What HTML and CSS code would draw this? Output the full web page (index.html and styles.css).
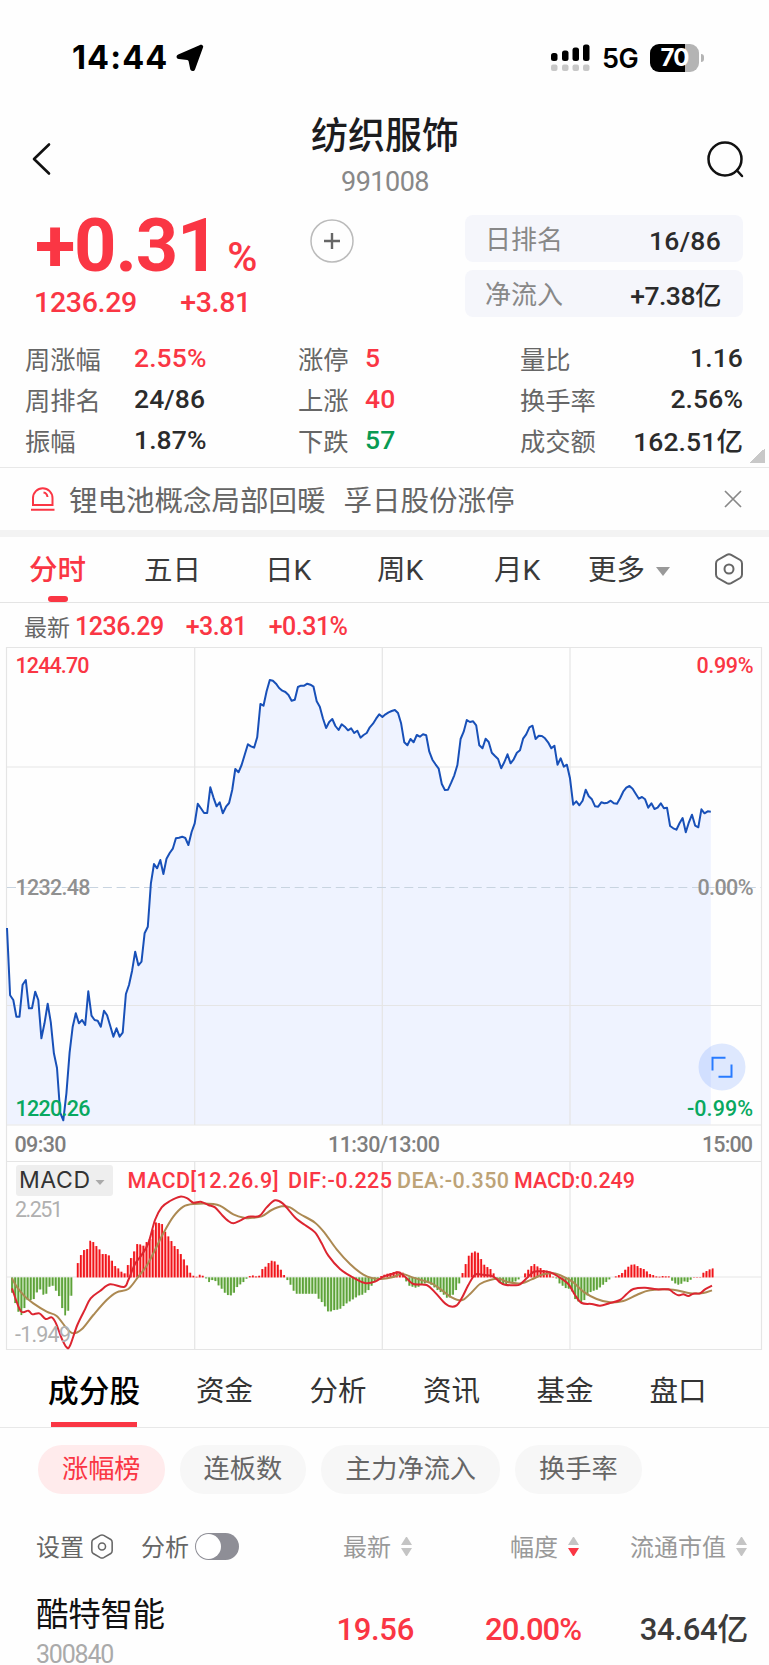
FILE: index.html
```html
<!DOCTYPE html>
<html lang="zh-CN">
<head>
<meta charset="utf-8">
<title>纺织服饰 991008</title>
<link rel="stylesheet" href="styles.css">
</head>
<body>
<header class="status">
  <div class="status-left">
    <span class="clock">14:44</span>
    <svg class="nav-arrow" width="28" height="28" viewBox="0 0 28 28"><path d="M26.300 1.200C27.200 1.500 27.400 2.400 27 3.500L19 25.400C18.200 27.600 14.600 27.500 14.200 25L12.600 17.300Q12.400 16.200 11.300 16L2.800 15.100C0 14.700-.2 11.600 2.200 10.500L23.500 1.200C24.700.7 25.700.8 26.300 1.200Z"/></svg>
  </div>
  <div class="status-right">
    <svg width="40" height="28" viewBox="0 0 40 28"><g fill="#000"><rect x="0" y="9" width="6.500" height="8" rx="2.500"/><rect x="11" y="6.500" width="6.500" height="10.500" rx="2.500"/><rect x="21.500" y="3.500" width="6.500" height="13.500" rx="2.500"/><rect x="32" y=".5" width="6.500" height="16.500" rx="2.500"/></g><g fill="#c8c8c8"><rect x="0" y="20.500" width="6.500" height="6.500" rx="2"/><rect x="11" y="20.500" width="6.500" height="6.500" rx="2"/><rect x="21.500" y="20.500" width="6.500" height="6.500" rx="2"/><rect x="32" y="20.500" width="6.500" height="6.500" rx="2"/></g></svg>
    <span class="net">5G</span>
    <div class="battery"><span>70</span></div><i class="nub"></i>
  </div>
</header>

<nav class="titlebar">
  <svg class="back" width="20" height="34" viewBox="0 0 20 34"><path d="M17 2.500L2 17L17 31.500"/></svg>
  <div class="title"><h1>纺织服饰</h1><p>991008</p></div>
  <svg class="search" width="40" height="40" viewBox="0 0 40 40"><circle cx="19" cy="19" r="16.500"/><path d="M31 30.500L36 36"/></svg>
</nav>

<section class="hero">
  <div class="quote">
    <div class="change">+0.31<small>%</small></div>
    <div class="price"><span>1236.29</span><span>+3.81</span></div>
  </div>
  <svg class="add" width="44" height="44" viewBox="0 0 44 44"><circle cx="22" cy="22" r="21"/><path d="M14 22H30M22 14V30"/></svg>
  <div class="ranks">
    <div class="rank"><label>日排名</label><b>16/86</b></div>
    <div class="rank"><label>净流入</label><b class="tight">+7.38亿</b></div>
  </div>
</section>

<section class="stats">
  <label>周涨幅</label><b class="red">2.55%</b><label>涨停</label><b class="red">5</b><label>量比</label><b class="r">1.16</b>
  <label>周排名</label><b>24/86</b><label>上涨</label><b class="red">40</b><label>换手率</label><b class="r">2.56%</b>
  <label>振幅</label><b>1.87%</b><label>下跌</label><b class="green">57</b><label>成交额</label><b class="r">162.51亿</b>
  <i class="corner"></i>
</section>

<section class="news">
  <svg width="26" height="26" viewBox="0 0 26 26"><path d="M3 19V12A9.700 9.700 0 0 1 22.500 12V19Z M1 23.700H24.500 M13.500 6.500Q17 7 17.500 11"/></svg>
  <p><span>锂电池概念局部回暖</span><span>孚日股份涨停</span></p>
  <svg class="close" width="18" height="18" viewBox="0 0 18 18"><path d="M1 1L17 17M17 1L1 17"/></svg>
</section>

<nav class="periods">
  <a class="on">分时</a><a>五日</a><a>日K</a><a>周K</a><a>月K</a><a>更多<i class="caret"></i></a>
  <svg width="30" height="32" viewBox="0 0 30 32"><path d="M12.800 1.800Q15 .6 17.200 1.800L26.200 7Q28 8.200 28 10.500V21.500Q28 23.800 26.200 25L17.200 30.200Q15 31.400 12.800 30.200L3.800 25Q2 23.800 2 21.500V10.500Q2 8.200 3.800 7Z"/><circle cx="15" cy="16" r="4.500"/></svg>
</nav>

<div class="latest"><label>最新</label><span>1236.29</span><span>+3.81</span><span>+0.31%</span></div>

<svg class="chart" width="769" height="706" viewBox="0 646 769 706">
  <path id="area"/>
  <g class="grid">
    <path d="M6.500 647.500H761.500V1349.500H6.500ZM6.500 767H761.500M6.500 1005.500H761.500M6.500 1125H761.500M6.500 1161.500H761.500M6.500 1277H761.500"/>
    <path d="M194.700 648V1125M382.300 648V1125M570 648V1125M194.700 1162V1349M382.300 1162V1349M570 1162V1349"/>
  </g>
  <path class="mid" d="M7 887.500H761"/>
  <path id="line"/>
  <g class="axis">
    <text class="up" x="15.500" y="672.500" textLength="74">1244.70</text>
    <text class="up" x="696.500" y="672.500" textLength="57">0.99%</text>
    <text class="flat" x="15.500" y="895" textLength="75">1232.48</text>
    <text class="flat" x="697.500" y="895" textLength="56">0.00%</text>
    <text class="down" x="15.500" y="1116" textLength="75">1220.26</text>
    <text class="down" x="687" y="1116" textLength="66">-0.99%</text>
    <text class="time" x="14.500" y="1151.500" textLength="52">09:30</text>
    <text class="time" x="328" y="1151.500" textLength="112">11:30/13:00</text>
    <text class="time" x="702" y="1151.500" textLength="51">15:00</text>
  </g>
  <g class="expand"><circle cx="722" cy="1067" r="23.500"/><path d="M712.500 1070.500V1057.700H725.500M731.500 1064.500V1076.800H718.500"/></g>
  <g id="bars"></g>
  <path id="dea"/><path id="dif"/>
  <rect class="pick" x="16" y="1165" width="97" height="31" rx="3"/>
  <text class="pick-text" x="19" y="1188" textLength="71">MACD</text>
  <path class="pick-caret" d="M95.500 1180H104.500L100 1185Z"/>
  <g class="macd">
    <text class="up" x="127.500" y="1187.500" textLength="151">MACD[12.26.9]</text>
    <text class="up" x="288" y="1187.500" textLength="104">DIF:-0.225</text>
    <text class="dea-text" x="397" y="1187.500" textLength="112">DEA:-0.350</text>
    <text class="up" x="514" y="1187.500" textLength="121">MACD:0.249</text>
    <text class="range" x="15" y="1217" textLength="48">2.251</text>
    <text class="range" x="15" y="1342" textLength="56">-1.949</text>
  </g>
</svg>

<nav class="sections"><a class="on">成分股</a><a>资金</a><a>分析</a><a>资讯</a><a>基金</a><a>盘口</a></nav>

<div class="chips"><a class="on">涨幅榜</a><a>连板数</a><a>主力净流入</a><a>换手率</a></div>

<div class="thead">
  <span class="set">设置</span>
  <svg class="hex" width="24" height="25" viewBox="0 0 30 32"><path d="M12.800 1.800Q15 .6 17.200 1.800L26.200 7Q28 8.200 28 10.500V21.500Q28 23.800 26.200 25L17.200 30.200Q15 31.400 12.800 30.200L3.800 25Q2 23.800 2 21.500V10.500Q2 8.200 3.800 7Z"/><circle cx="15" cy="16" r="4.500"/></svg>
  <span class="set">分析</span><i class="toggle"></i>
  <span class="col">最新<i class="sort"></i></span>
  <span class="col">幅度<i class="sort desc"></i></span>
  <span class="col">流通市值<i class="sort"></i></span>
</div>

<div class="stock">
  <div class="who"><strong>酷特智能</strong><small>300840</small></div>
  <b class="red">19.56</b><b class="red pct">20.00%</b><b>34.64亿</b>
</div>
<script src="chart.js"></script>
</body>
</html>
```
FILE: styles.css
```css
*{box-sizing:border-box}
body{margin:0;width:769px;height:1665px;overflow:hidden;background:#fefefe;color:#333;font-family:Roboto,"Noto Sans CJK SC",sans-serif}
b{font-weight:500}
h1,p{margin:0}
a{white-space:nowrap}
i{display:block}
.red{color:#fa3644}
.green{color:#099a52}

.status{height:100px;padding:42px 65px 0 72px;display:flex;justify-content:space-between;align-items:flex-start;color:#000}
.status-left,.status-right{display:flex;align-items:center;height:32px}
.clock{font:700 32.500px/32px Inter,sans-serif;letter-spacing:1.100px;width:104px}
.nav-arrow{fill:#000}
.net{font:600 27px/32px Inter,sans-serif;letter-spacing:-.6px;margin:2px 0 0 11px;width:48px}
.battery{width:49px;height:28px;border-radius:9px;background:linear-gradient(90deg,#000 35px,#b4b4b4 35px);color:#fff;font:700 24px/28px Inter,sans-serif;letter-spacing:-1px;text-align:center}
.nub{width:3px;height:8px;margin-left:2px;border-radius:0 4px 4px 0;background:#b4b4b4}

.titlebar{height:110px;padding:0 23px 0 32px;display:flex;justify-content:space-between}
.titlebar svg{fill:none;stroke:#111;stroke-linecap:round;stroke-linejoin:round}
.back{margin-top:42px;width:20px;stroke-width:2.6}
.search{margin-top:40px;stroke-width:2.5}
.title{text-align:center;padding:15px 0 0 12px}
.title h1{font-size:37px;font-weight:500;line-height:44px;color:#1c1c1e}
.title p{font-size:27px;line-height:30px;margin-top:8px;color:#888;letter-spacing:-.5px}

.hero{height:126px;display:flex;padding:5px 26px 0 35px;color:#fa3644}
.quote{width:275px}
.change{font-size:74px;line-height:62px;font-weight:700;letter-spacing:-1.200px;white-space:nowrap;height:70px}
.change small{font-size:41px;font-weight:500;letter-spacing:0;margin-left:9px}
.price{display:flex;justify-content:space-between;width:217px;font-size:28.500px;font-weight:500;line-height:34px;margin:1px 0 0 -1px;letter-spacing:-.3px}
.add{margin-top:4px;fill:none;stroke:#bbb;stroke-width:1.500}
.add path{stroke:#666;stroke-width:2.400}
.ranks{margin-left:auto;width:278px}
.rank{height:47px;margin-bottom:8px;padding:0 22px 0 20px;background:#f5f6fb;border-radius:8px;display:flex;align-items:center;justify-content:space-between;color:#2b2b2b;font-size:26.500px}
.rank label{color:#888;font-size:26px;padding-bottom:2px}
.rank b{letter-spacing:.3px;padding-top:3px}
.rank .tight{letter-spacing:-.5px;padding-top:0}

.stats{position:relative;height:131px;padding:1px 26px 0 25px;display:grid;grid-template-columns:109px 164px 67px 155px 100px 1fr;grid-auto-rows:41px;align-items:center;font-size:26.500px;color:#2b2b2b}
.stats label{font-size:25.300px;color:#666}
.stats b{letter-spacing:.1px;white-space:nowrap}
.r{text-align:right}
.corner{position:absolute;right:4px;bottom:4px;width:15px;height:15px;background:linear-gradient(135deg,transparent 50%,#c8c8c8 50%)}

.news{height:70px;border-top:1px solid #e8e8e8;border-bottom:7px solid #f3f3f3;padding:0 27px 0 30px;display:flex;align-items:center}
.news svg{fill:none;stroke:#fa3644;stroke-width:2}
.news p{flex:1;display:flex;gap:18px;margin:-2px 0 0 13px;font-size:28.500px;color:#666}
.news .close{stroke:#888;stroke-width:1.700}

.periods{height:66px;border-bottom:1px solid #e4e4e4;padding:2px 25px 0 29px;display:grid;grid-template-columns:115px 121px 112px 117px 94px 1fr 30px;align-items:center;font-size:28.500px;color:#3a3a3a}
.periods a{position:relative;line-height:40px}
.periods .on{color:#fa3644;font-weight:500}
.periods .on::after{content:"";position:absolute;left:19px;top:45px;width:20px;height:6px;border-radius:3px;background:#fa3644}
.periods svg,.hex{fill:none;stroke:#666;stroke-width:2}
.periods svg{margin-top:-3px}
.caret{display:inline-block;margin:0 0 4px 11px;border:7px solid transparent;border-top:9px solid #999;border-bottom:0}

.latest{height:43px;padding:3px 0 0 24px;display:flex;align-items:center;font-size:25px;font-weight:500;color:#fa3644}
.latest label{font-size:23px;font-weight:400;color:#666;margin-right:5px}
.latest span{margin-right:22px;letter-spacing:-.5px}

.chart{display:block;font-family:Roboto,sans-serif}
#area{fill:#eff3ff}
.grid{fill:none;stroke:#e5e5e5;stroke-width:1.200}
.mid{stroke:#c8d4e0;stroke-width:1.200;stroke-dasharray:9 4.700}
#line{fill:none;stroke:#1850b8;stroke-width:2;stroke-linejoin:round}
.axis text{font-size:21.500px;font-weight:500}
.up{fill:#fa3644}
.down{fill:#08a860}
.axis .flat{fill:#909090}
.axis .time{fill:#7e7e7e}
.expand circle{fill:#417cff;fill-opacity:.17}
.expand path{fill:none;stroke:#287bff;stroke-width:2}
#dif,#dea{fill:none;stroke-width:2}
#dif{stroke:#dc2530}
#dea{stroke:#ac8952}
.bar-up{fill:#f0141a}
.bar-down{fill:#5da239}
.bar-bg-up{fill:#ffc4c4}
.bar-bg-down{fill:#d0e8c4}
.pick{fill:#eee}
.pick-text{font:400 23px Inter,sans-serif;fill:#333}
.pick-caret{fill:#aaa}
.macd text{font-size:21.500px;font-weight:500}
.macd .dea-text{fill:#bda377}
.macd .range{fill:#b0b0b0;font-weight:400}

.sections{height:76px;border-bottom:1px solid #e8e8e8;padding:4px 0 0 48px;display:grid;grid-template-columns:148px 113.500px 113.500px 113.500px 113px 1fr;align-items:center;font-size:28.500px;color:#333}
.sections a{position:relative;line-height:40px}
.sections .on{font-size:30.700px;font-weight:500;color:#000}
.sections .on::after{content:"";position:absolute;left:3px;top:50px;width:86px;height:5px;background:#fa3644}

.chips{display:flex;gap:15px;padding:17px 38px 0}
.chips a{height:49px;line-height:49px;padding:0 24px;border-radius:24px;background:#f7f7f7;color:#666;font-size:26.200px}
.chips .on{background:#ffebec;color:#fa3644}

.thead{height:88px;padding:17px 22px 0 36px;display:grid;grid-template-columns:54px 51px 54px 45px 172px 167px 1fr;align-items:center;color:#999;font-size:24px;white-space:nowrap}
.thead span{margin-top:-3px}
.set{color:#666}
.toggle{width:44px;height:27px;border-radius:14px;background:#8e8e96}
.toggle::after{content:"";display:block;width:25px;height:25px;margin:1px;border-radius:50%;background:#fff}
.col{display:flex;align-items:center;justify-content:flex-end}
.sort{width:11px;height:19px;margin:2px 0 0 10px}
.sort::before,.sort::after{content:"";display:block;border:5.500px solid transparent}
.sort::before{border-top:0;border-bottom:8px solid #c4c4c4}
.sort::after{margin-top:3px;border-bottom:0;border-top:8px solid #c4c4c4}
.sort.desc::after{border-top-color:#fa3644}

.stock{padding:11px 21px 0 36px;display:grid;grid-template-columns:204px 174px 167px 1fr;font-size:31px;color:#3b3b3b;letter-spacing:-.3px}
.stock strong{display:block;font-size:32.500px;font-weight:400;line-height:44px;color:#111}
.stock small{display:block;font-size:25px;line-height:30px;margin-top:3px;color:#aaa;letter-spacing:-1.200px}
.stock b{text-align:right;padding-top:19px;line-height:36px;white-space:nowrap}
.stock .pct{letter-spacing:-1px}
```
FILE: chart.js
```js
const STEP = 3.128;

// Minute prices, as thirds of a pixel below the top of the plot.
const price = [
864,1066,1080,1130,1130,1034,1020,1105,1105,1055,1080,1195,1150,1091,1147,1240,1284,1418,1441,1360,
1238,1160,1120,1150,1140,1155,1054,1127,1140,1142,1160,1112,1126,1157,1190,1165,1190,1178,1062,1035,
992,935,976,965,880,860,730,672,685,660,702,656,639,626,595,593,590,594,615,576,
550,491,505,519,519,442,472,499,487,520,500,489,450,387,397,375,344,313,319,323,
292,192,197,154,120,122,131,144,152,156,165,182,179,141,137,137,131,134,140,184,
200,235,264,246,237,258,270,253,260,271,265,279,272,293,285,279,262,251,236,223,
231,223,217,213,210,219,250,307,316,297,307,285,290,283,286,335,359,373,386,432,
450,449,428,406,375,297,275,240,246,244,256,316,325,296,306,338,348,357,385,366,
343,370,358,338,331,296,283,262,257,297,287,288,295,307,325,317,374,355,380,374,
415,494,484,496,482,449,469,478,499,500,487,490,488,482,490,491,475,455,443,438,
446,461,476,471,478,503,490,507,503,490,505,503,558,565,569,550,534,577,547,524,
557,562,508,520,514,515];

const pts = price.map((v, i) => [7 + i * STEP, 640 + v / 3]);
const poly = 'M' + pts.map(p => p[0].toFixed(1) + ' ' + p[1].toFixed(1)).join('L');
document.getElementById('line').setAttribute('d', poly);
document.getElementById('area').setAttribute('d', poly + 'V1124.500H7Z');

const hist = [
-46,-77,-103,-113,-92,-68,-68,-65,-45,-36,-52,-49,-28,-25,-40,-56,-92,-114,-100,-55,
0,43,67,82,85,110,106,94,84,70,70,66,50,34,27,17,12,37,58,78,
100,99,95,106,115,143,165,163,160,137,123,109,94,85,70,54,36,14,5,2,
8,5,-3,-14,-8,-11,-24,-34,-46,-53,-54,-46,-29,-21,-14,-4,4,6,3,5,
25,32,43,50,48,38,23,7,-8,-22,-40,-49,-49,-49,-49,-49,-49,-49,-64,-74,
-87,-102,-102,-98,-97,-94,-86,-78,-72,-66,-60,-54,-52,-46,-38,-25,-14,-4,4,8,
11,13,16,18,17,14,-12,-25,-28,-31,-28,-22,-18,-16,-22,-30,-38,-44,-52,-61,
-60,-52,-38,-18,13,40,65,74,78,74,55,38,31,25,12,-2,-14,-20,-20,-16,
-14,-12,-6,0,12,23,34,40,33,28,22,20,12,2,-3,-18,-25,-32,-34,-42,
-65,-72,-75,-68,-54,-44,-40,-37,-30,-22,-14,-6,0,3,7,13,23,32,38,39,
34,28,25,18,10,7,3,2,4,3,3,-10,-18,-22,-19,-12,-14,-7,1,1,
1,14,19,24,27];

const NS = 'http://www.w3.org/2000/svg';
const bars = document.getElementById('bars');
function rect(x, w, v, cls) {
  const r = document.createElementNS(NS, 'rect');
  const h = Math.abs(v) / 3;
  r.setAttribute('x', x);
  r.setAttribute('width', w);
  r.setAttribute('y', v > 0 ? 1277.4 - h : 1277.4);
  r.setAttribute('height', h);
  r.setAttribute('class', cls);
  bars.appendChild(r);
}
hist.forEach((v, k) => {
  if (!v) return;
  const dir = v > 0 ? 'up' : 'down';
  const x = 12 + k * STEP;
  const next = hist[k + 1] || 0;
  if (v * next > 0) rect(x, STEP, Math.abs(v) < Math.abs(next) ? v : next, 'bar-bg-' + dir);
});
hist.forEach((v, k) => {
  if (v) rect(12 + k * STEP - 0.9, 1.8, v, v > 0 ? 'bar-up' : 'bar-down');
});

// Curves are stored per panel: x offset, then x,y pairs in thirds of a pixel.
const dif = [
[0, 36,505,62,573,85,572,97,583,118,580,137,597,155,592,168,610,185,655,200,682,210,677,232,615,255,568,272,535,300,513,330,493,372,501,385,480,405,432,425,405,445,370,465,300,485,262,510,243,540,230,562,235,580,248,602,245,625,255,645,262,665,284,685,303,700,310,720,302,745,290],
[250, 28,288,50,262,75,241,98,250,120,275,140,297,165,315,195,337,215,370,235,407,270,447,310,473,345,489,375,485,400,470,425,462,445,457,465,470,490,492,530,495,555,517,580,545,600,559,620,556,635,535,655,495,675,464,695,464,730,470],
[500, 0,487,15,494,45,496,60,493,80,475,100,456,120,454,150,457,175,470,205,492,225,525,245,549,275,552,300,557,330,549,360,540,380,522,400,507,435,503,470,508,505,508,520,518,535,526,550,523,565,528,580,521,600,520,615,508,636,497]];
const dea = [
[0, 36,475,50,500,75,530,100,550,140,575,170,588,200,625,220,640,245,628,280,585,320,540,350,517,385,507,415,470,440,437,465,390,490,340,520,290,550,260,580,252,640,252,665,260,700,283,735,294],
[250, 0,294,35,289,65,270,95,259,120,262,150,282,195,308,225,340,260,388,300,432,340,464,370,475,395,477,430,471,455,461,490,473,520,482,545,490,575,510,605,532,635,541,660,522,690,492,720,480],
[500, 0,477,25,487,65,490,95,478,130,463,160,460,190,470,220,487,250,515,290,537,330,547,370,543,410,525,450,511,520,509,570,520,610,519,636,511]];

function smooth(panels) {
  const p = [];
  panels.forEach(([off, ...xy]) => {
    for (let i = 0; i < xy.length; i += 2) p.push([off + xy[i] / 3, 1120 + xy[i + 1] / 3]);
  });
  let d = 'M' + p[0];
  for (let i = 0; i < p.length - 1; i++) {
    const a = p[i - 1] || p[i], b = p[i], c = p[i + 1], e = p[i + 2] || c;
    d += `C${b[0] + (c[0] - a[0]) / 6} ${b[1] + (c[1] - a[1]) / 6} ${c[0] - (e[0] - b[0]) / 6} ${c[1] - (e[1] - b[1]) / 6} ${c[0]} ${c[1]}`;
  }
  return d;
}
document.getElementById('dif').setAttribute('d', smooth(dif));
document.getElementById('dea').setAttribute('d', smooth(dea));
```
